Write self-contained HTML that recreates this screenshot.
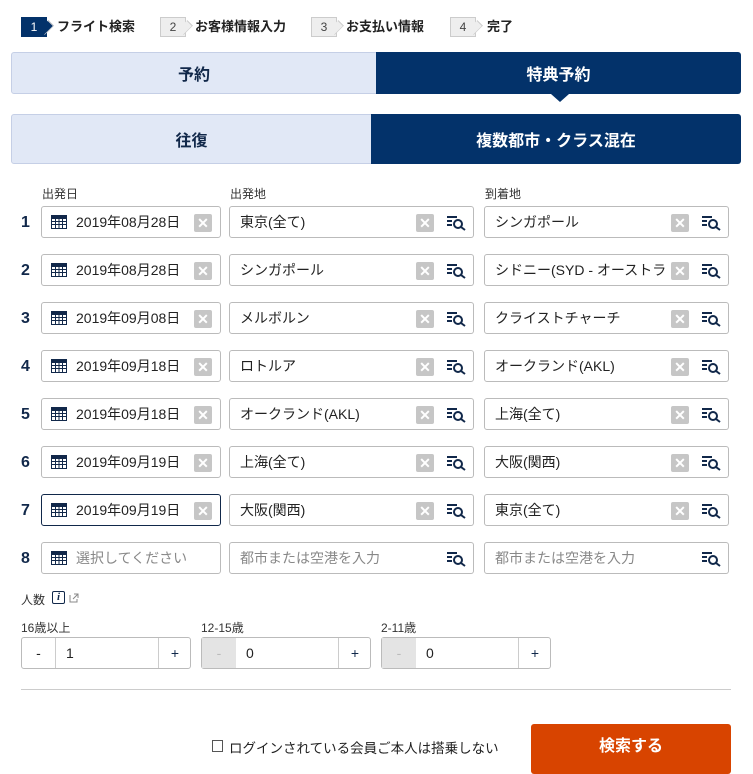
<!DOCTYPE html>
<html><head><meta charset="utf-8"><style>
*{box-sizing:border-box;margin:0;padding:0}
body{width:753px;height:767px;overflow:hidden;background:#fff;font-family:"Liberation Sans","Noto Sans CJK JP",sans-serif;color:#222;position:relative}
.a{position:absolute}
.step{position:absolute;top:17px;height:20px;font-size:13px;line-height:20px;font-weight:bold}
.sn{position:absolute;top:0;width:26px;height:20px;background:#eee;border:1px solid #ccc;font-size:12px;text-align:center;line-height:18px;color:#444;font-weight:normal}
.sn:after{content:"";position:absolute;right:-7px;top:3px;width:12px;height:12px;background:inherit;border-right:1px solid #ccc;border-top:1px solid #ccc;transform:rotate(45deg) scaleX(.6)}
.tab{position:absolute;font-weight:bold;font-size:16px;display:flex;align-items:center;justify-content:center}
.lt{background:#e1e8f6;border:1px solid #c5cfe6;color:#11284a;border-radius:3px 0 0 3px}
.dk{background:#03326a;color:#fff}
.lbl{position:absolute;font-size:12px;color:#333}
.num{position:absolute;left:21px;font-size:16px;font-weight:bold;color:#11284a}
.box{position:absolute;height:32px;border:1px solid #bbb;border-radius:3px;font-size:14px;line-height:30px;background:#fff;white-space:nowrap;overflow:hidden}
.x{position:absolute;top:7px;width:18px;height:18px;background:#c6c6c6;border-radius:2px;color:#fff;font-size:14px;line-height:18px;text-align:center;font-weight:bold}
.sb{position:absolute;height:32px;width:33px;border:1px solid #bbb;border-left:none;border-radius:0 3px 3px 0;background:#fff}
.cnt{position:absolute;top:637px;height:32px;border:1px solid #bbb;border-radius:3px;font-size:14px}
.cnt div{position:absolute;top:0;height:30px;line-height:30px;text-align:center}
</style></head><body>
<div class="step" style="left:21px"><div class="sn" style="background:#03326a;border-color:#03326a;color:#fff">1</div><span class="a" style="left:36px;white-space:nowrap">フライト検索</span></div>
<div class="step" style="left:160px"><div class="sn">2</div><span class="a" style="left:35px;white-space:nowrap">お客様情報入力</span></div>
<div class="step" style="left:311px"><div class="sn">3</div><span class="a" style="left:35px;white-space:nowrap">お支払い情報</span></div>
<div class="step" style="left:450px"><div class="sn">4</div><span class="a" style="left:37px;white-space:nowrap">完了</span></div>

<div class="tab lt" style="left:11px;top:52px;width:366px;height:42px">予約</div>
<div class="tab dk" style="left:376px;top:52px;width:365px;height:42px;border-radius:0 3px 3px 0">特典予約</div>
<div class="a" style="left:551px;top:94px;border-left:9px solid transparent;border-right:9px solid transparent;border-top:8px solid #03326a"></div>
<div class="tab lt" style="left:11px;top:114px;width:361px;height:50px">往復</div>
<div class="tab dk" style="left:371px;top:114px;width:370px;height:50px;border-radius:0 3px 3px 0">複数都市・クラス混在</div>

<div class="lbl" style="left:42px;top:185px">出発日</div>
<div class="lbl" style="left:230px;top:185px">出発地</div>
<div class="lbl" style="left:485px;top:185px">到着地</div>

<div id="rows"></div>
<script>
var d=[["2019年08月28日","東京(全て)","シンガポール"],["2019年08月28日","シンガポール","シドニー(SYD - オーストラリア)"],["2019年09月08日","メルボルン","クライストチャーチ"],["2019年09月18日","ロトルア","オークランド(AKL)"],["2019年09月18日","オークランド(AKL)","上海(全て)"],["2019年09月19日","上海(全て)","大阪(関西)"],["2019年09月19日","大阪(関西)","東京(全て)"],["","",""]];
var cal='<svg class="a" style="left:9px;top:8px" width="16" height="14" viewBox="0 0 16 14"><g fill="none" stroke="#11284a" stroke-width="1"><rect x=".5" y=".5" width="15" height="13"/><path d="M.5 3.5h15M.5 6.5h15M.5 9.5h15M4.5 1v13M8 1v13M11.5 1v13"/></g><rect x="0" y="0" width="16" height="3" fill="#11284a"/></svg>';
var srch='<svg class="a" style="left:6px;top:8px" width="20" height="16" viewBox="0 0 20 16"><g stroke="#11284a" stroke-width="2" fill="none"><path d="M0 2h10M0 6h5M0 10h5"/><circle cx="11" cy="9" r="4"/><path d="M14 12l4 3"/></g></svg>';
var h='';
for(var i=0;i<8;i++){var y=206+i*48,r=d[i],e=i==7;
h+='<div class="num" style="top:'+(y+8)+'px">'+(i+1)+'</div>';
h+='<div class="box" style="left:41px;top:'+y+'px;width:180px;'+(i==6?'border-color:#11284a;':'')+'">'+cal+'<span class="a" style="left:34px;'+(e?'color:#888':'')+'">'+(e?'選択してください':r[0])+'</span>'+(e?'':'<div class="x" style="left:152px">✕</div>')+'</div>';
h+='<div class="box" style="left:229px;top:'+y+'px;width:213px;border-radius:3px 0 0 3px"><span class="a" style="left:10px;'+(e?'color:#888':'')+'">'+(e?'都市または空港を入力':r[1])+'</span>'+(e?'':'<div class="x" style="left:186px">✕</div>')+'</div><div class="sb" style="left:441px;top:'+y+'px">'+srch+'</div>';
h+='<div class="box" style="left:484px;top:'+y+'px;width:213px;border-radius:3px 0 0 3px"><span class="a" style="left:10px;width:172px;overflow:hidden;'+(e?'color:#888':'')+'">'+(e?'都市または空港を入力':r[2])+'</span>'+(e?'':'<div class="x" style="left:186px;box-shadow:0 0 0 3px #fff">✕</div>')+'</div><div class="sb" style="left:696px;top:'+y+'px">'+srch+'</div>';}
document.getElementById('rows').innerHTML=h;
</script>

<div class="lbl" style="left:21px;top:591px">人数</div>
<div class="a" style="left:52px;top:591px;width:13px;height:13px;border:1.5px solid #11284a;border-radius:2px;font:italic bold 11px 'Liberation Serif',serif;text-align:center;line-height:11px;color:#11284a">i</div>
<svg class="a" style="left:69px;top:593px" width="10" height="10"><path d="M1 2v7h7V6M5 1h4v4M9 1L4 6" stroke="#888" fill="none"/></svg>
<div class="lbl" style="left:21px;top:619px">16歳以上</div>
<div class="lbl" style="left:201px;top:619px">12-15歳</div>
<div class="lbl" style="left:381px;top:619px">2-11歳</div>
<div class="cnt" style="left:21px;width:170px"><div style="left:0;width:34px;border-right:1px solid #ccc">-</div><div style="left:34px;width:102px;text-align:left;padding-left:10px">1</div><div style="left:136px;width:33px;border-left:1px solid #ccc;color:#11284a">+</div></div>
<div class="cnt" style="left:201px;width:170px"><div style="left:0;width:34px;background:#e4e4e4;color:#bbb">-</div><div style="left:34px;width:102px;text-align:left;padding-left:10px">0</div><div style="left:136px;width:33px;border-left:1px solid #ccc;color:#11284a">+</div></div>
<div class="cnt" style="left:381px;width:170px"><div style="left:0;width:34px;background:#e4e4e4;color:#bbb">-</div><div style="left:34px;width:102px;text-align:left;padding-left:10px">0</div><div style="left:136px;width:33px;border-left:1px solid #ccc;color:#11284a">+</div></div>
<div class="a" style="left:21px;top:689px;width:710px;height:1px;background:#ccc"></div>
<div class="a" style="left:212px;top:740px;width:11px;height:12px;border:1px solid #555"></div>
<div class="a" style="left:229px;top:737px;font-size:13.5px;white-space:nowrap">ログインされている会員ご本人は搭乗しない</div>
<div class="a" style="left:531px;top:724px;width:200px;height:50px;background:#d84400;border-radius:3px;color:#fff;font-weight:bold;font-size:16px;text-align:center;line-height:46px">検索する</div>
</body></html>
